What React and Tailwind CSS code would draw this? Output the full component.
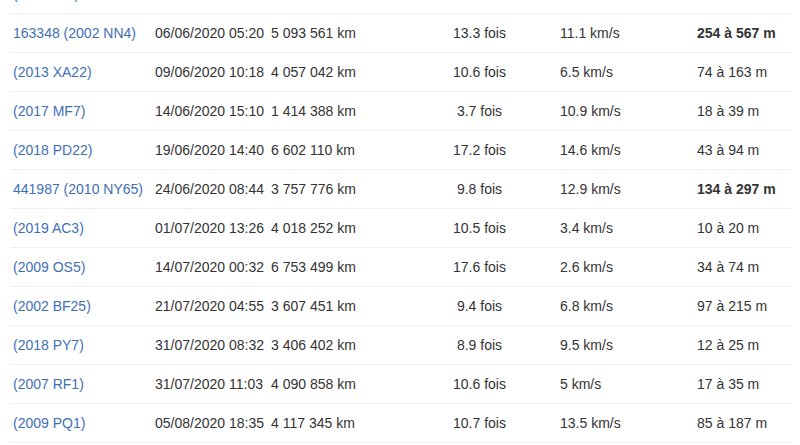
import React from 'react';

const rows = [
  { name: '(2020 JJ1)', date: '02/06/2020 21:47', dist: '4 233 114 km', lunar: '11.0 fois', speed: '8.2 km/s', size: '21 à 46 m' },
  { name: '163348 (2002 NN4)', date: '06/06/2020 05:20', dist: '5 093 561 km', lunar: '13.3 fois', speed: '11.1 km/s', size: '254 à 567 m', bold: true },
  { name: '(2013 XA22)', date: '09/06/2020 10:18', dist: '4 057 042 km', lunar: '10.6 fois', speed: '6.5 km/s', size: '74 à 163 m' },
  { name: '(2017 MF7)', date: '14/06/2020 15:10', dist: '1 414 388 km', lunar: '3.7 fois', speed: '10.9 km/s', size: '18 à 39 m' },
  { name: '(2018 PD22)', date: '19/06/2020 14:40', dist: '6 602 110 km', lunar: '17.2 fois', speed: '14.6 km/s', size: '43 à 94 m' },
  { name: '441987 (2010 NY65)', date: '24/06/2020 08:44', dist: '3 757 776 km', lunar: '9.8 fois', speed: '12.9 km/s', size: '134 à 297 m', bold: true },
  { name: '(2019 AC3)', date: '01/07/2020 13:26', dist: '4 018 252 km', lunar: '10.5 fois', speed: '3.4 km/s', size: '10 à 20 m' },
  { name: '(2009 OS5)', date: '14/07/2020 00:32', dist: '6 753 499 km', lunar: '17.6 fois', speed: '2.6 km/s', size: '34 à 74 m' },
  { name: '(2002 BF25)', date: '21/07/2020 04:55', dist: '3 607 451 km', lunar: '9.4 fois', speed: '6.8 km/s', size: '97 à 215 m' },
  { name: '(2018 PY7)', date: '31/07/2020 08:32', dist: '3 406 402 km', lunar: '8.9 fois', speed: '9.5 km/s', size: '12 à 25 m' },
  { name: '(2007 RF1)', date: '31/07/2020 11:03', dist: '4 090 858 km', lunar: '10.6 fois', speed: '5 km/s', size: '17 à 35 m' },
  { name: '(2009 PQ1)', date: '05/08/2020 18:35', dist: '4 117 345 km', lunar: '10.7 fois', speed: '13.5 km/s', size: '85 à 187 m' },
  { name: '(2016 CO246)', date: '11/08/2020 02:14', dist: '5 212 870 km', lunar: '13.6 fois', speed: '7.7 km/s', size: '22 à 49 m' },
];

export default function App() {
  return (
    <div className="h-[445px] w-[800px] overflow-hidden bg-white font-['Liberation_Sans',Arial,sans-serif] text-[14px] text-[#333]">
      <div className="mt-[-26px] ml-[10px] w-[782px]">
        {rows.map((r) => (
          <div key={r.name} className="flex h-[39px] items-center border-t border-[#eeeeee]">
            <div className="w-[142px] pl-[3px] text-[#3f6fb5]">{r.name}</div>
            <div className="w-[116px] pl-[3px]">{r.date}</div>
            <div className="w-[172px] pl-[3px]">{r.dist}</div>
            <div className="w-[79px] text-center">{r.lunar}</div>
            <div className="w-[175px] pl-[41px]">{r.speed}</div>
            <div className={`w-[98px] pl-[3px] ${r.bold ? 'font-bold' : ''}`}>{r.size}</div>
          </div>
        ))}
      </div>
    </div>
  );
}
